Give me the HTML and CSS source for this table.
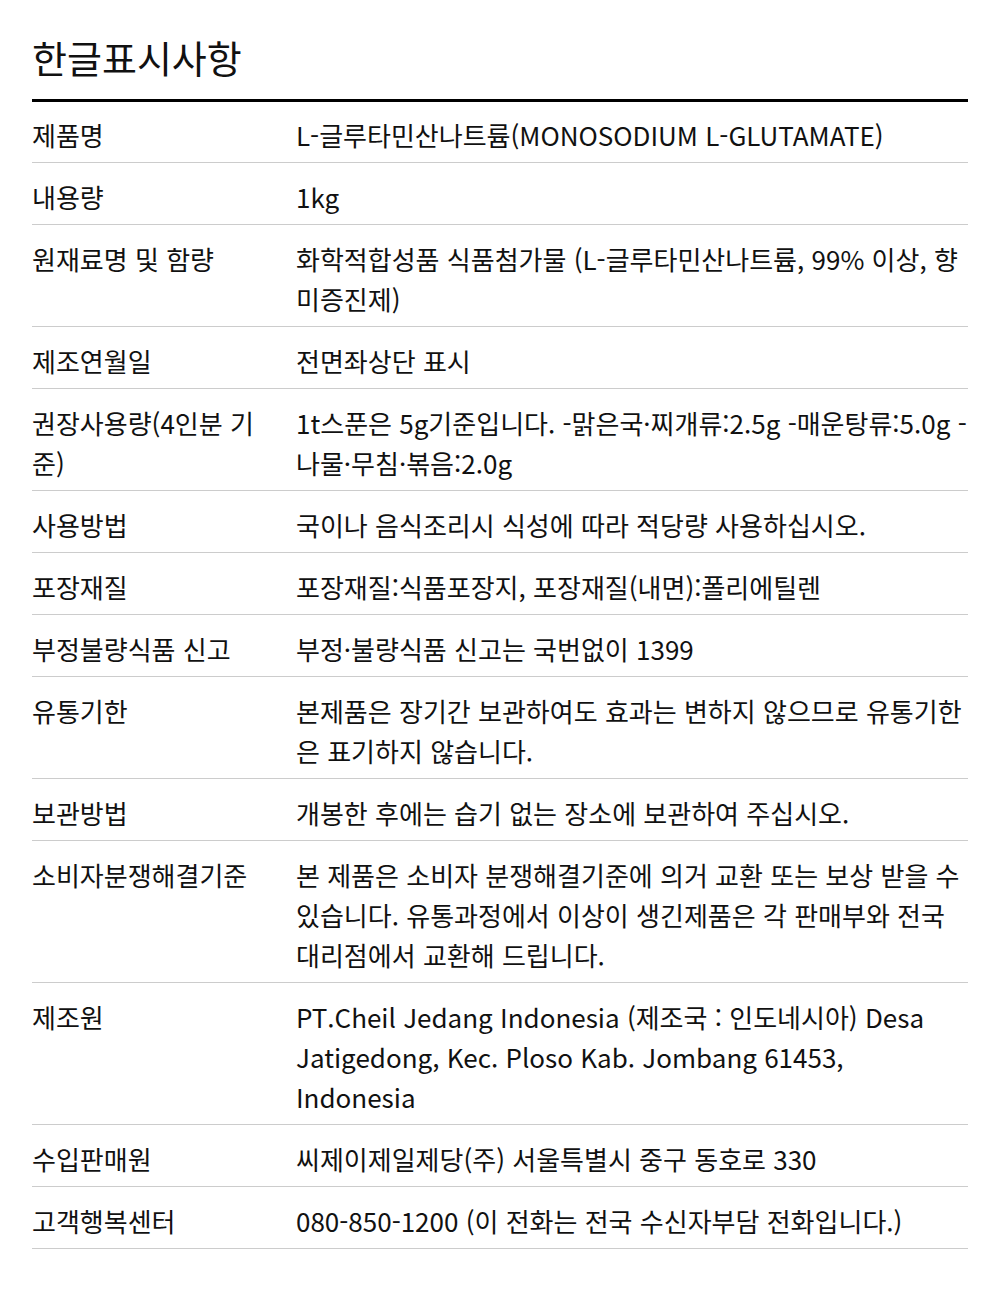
FILE: index.html
```html
<!DOCTYPE html>
<html lang="ko">
<head>
<meta charset="utf-8">
<link rel="stylesheet" href="styles.css">
</head>
<body>
<div class="page">
  <h1 class="title">한글표시사항</h1>
  <dl class="table">
    <div class="row"><dt>제품명</dt><dd>L-글루타민산나트륨(MONOSODIUM L-GLUTAMATE)</dd></div>
    <div class="row"><dt>내용량</dt><dd>1kg</dd></div>
    <div class="row"><dt>원재료명 및 함량</dt><dd>화학적합성품 식품첨가물 (L-글루타민산나트륨, 99% 이상, 향미증진제)</dd></div>
    <div class="row"><dt>제조연월일</dt><dd>전면좌상단 표시</dd></div>
    <div class="row"><dt>권장사용량(4인분 기준)</dt><dd>1t스푼은 5g기준입니다. -맑은국·찌개류:2.5g -매운탕류:5.0g -나물·무침·볶음:2.0g</dd></div>
    <div class="row"><dt>사용방법</dt><dd>국이나 음식조리시 식성에 따라 적당량 사용하십시오.</dd></div>
    <div class="row"><dt>포장재질</dt><dd>포장재질:식품포장지, 포장재질(내면):폴리에틸렌</dd></div>
    <div class="row"><dt>부정불량식품 신고</dt><dd>부정·불량식품 신고는 국번없이 1399</dd></div>
    <div class="row"><dt>유통기한</dt><dd>본제품은 장기간 보관하여도 효과는 변하지 않으므로 유통기한은 표기하지 않습니다.</dd></div>
    <div class="row"><dt>보관방법</dt><dd>개봉한 후에는 습기 없는 장소에 보관하여 주십시오.</dd></div>
    <div class="row"><dt>소비자분쟁해결기준</dt><dd>본 제품은 소비자 분쟁해결기준에 의거 교환 또는 보상 받을 수 있습니다. 유통과정에서 이상이 생긴제품은 각 판매부와 전국 대리점에서 교환해 드립니다.</dd></div>
    <div class="row"><dt>제조원</dt><dd>PT.Cheil Jedang Indonesia (제조국 : 인도네시아) Desa Jatigedong, Kec. Ploso Kab. Jombang 61453, Indonesia</dd></div>
    <div class="row"><dt>수입판매원</dt><dd>씨제이제일제당(주) 서울특별시 중구 동호로 330</dd></div>
    <div class="row"><dt>고객행복센터</dt><dd>080-850-1200 (이 전화는 전국 수신자부담 전화입니다.)</dd></div>
  </dl>
</div>
</body>
</html>
```

FILE: styles.css
```css
html, body {
  margin: 0;
  padding: 0;
  background: #fff;
}
body {
  font-family: "Noto Sans CJK KR", "Noto Sans", sans-serif;
  color: #111;
}
.page {
  padding: 30px 32px 0 32px;
}
.title {
  margin: 0;
  font-size: 38px;
  font-weight: 400;
  line-height: 54px;
  padding-bottom: 15px;
  border-bottom: 3px solid #000;
}
.table {
  margin: 0;
}
.row {
  display: grid;
  grid-template-columns: 264px 1fr;
  border-bottom: 1px solid #ccc;
  padding: 14px 0 7px;
}
.row:first-child {
  padding-top: 13px;
}
.row dt, .row dd {
  margin: 0;
  font-size: 26px;
  line-height: 40px;
}
.row dt {
  padding-right: 10px;
}
```
